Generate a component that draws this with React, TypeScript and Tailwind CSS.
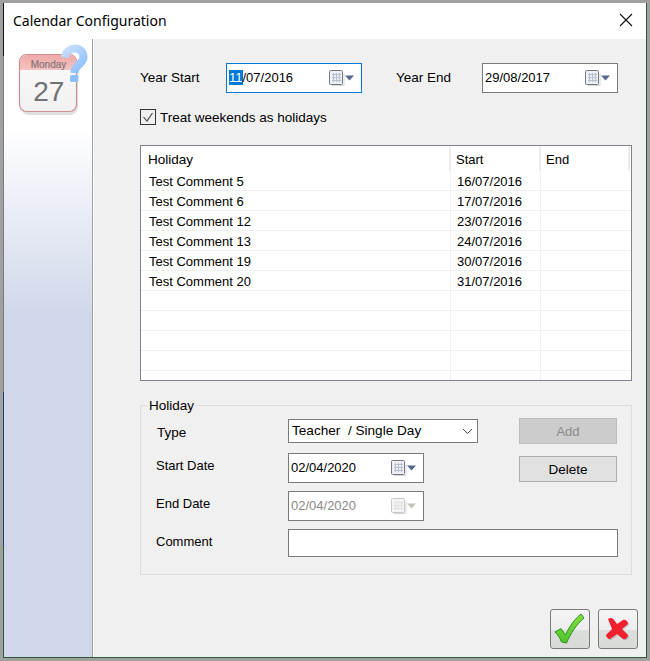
const holidays = [
  { name: "Test Comment 5", start: "16/07/2016" },
  { name: "Test Comment 6", start: "17/07/2016" },
  { name: "Test Comment 12", start: "23/07/2016" },
  { name: "Test Comment 13", start: "24/07/2016" },
  { name: "Test Comment 19", start: "30/07/2016" },
  { name: "Test Comment 20", start: "31/07/2016" },
  { name: "", start: "" },
  { name: "", start: "" },
  { name: "", start: "" },
  { name: "", start: "" },
  { name: "", start: "" },
];

function CalendarGlyph({ disabled }: { disabled?: boolean }) {
  const edge = disabled ? "#c8c8c8" : "#77777f";
  const grid = disabled ? "#e2e2e2" : "#b9bfd0";
  const arrow = disabled ? "#c4c4bc" : "#56688c";
  return (
    <svg width="26" height="16" viewBox="0 0 26 16" className="shrink-0">
      <path d="M3 15.5h12V4" fill="none" stroke="#d4d4d4" strokeWidth="1" />
      <rect x="0.5" y="0.5" width="13" height="14" rx="1" fill={disabled ? "#f4f4f4" : "#eeeff4"} stroke={edge} />
      <path d="M3 4.5h9M3 7.5h9M3 10.5h9M4.5 3v9M7.5 3v9M10.5 3v9" stroke={grid} strokeWidth="1" />
      <path d="M16 5.5h9l-4.5 5z" fill={arrow} />
    </svg>
  );
}

function DateField({ value, focused, disabled }: { value: string; focused?: boolean; disabled?: boolean }) {
  return (
    <div
      className={`flex h-[30px] w-[136px] shrink-0 items-center justify-between border bg-white pl-[2px] pr-[6px] ${
        focused ? "border-[#0078d7]" : "border-[#7a7a7a]"
      } ${disabled ? "text-[#8a8a8a]" : "text-black"}`}
    >
      <span>
        {focused ? (
          <>
            <span className="bg-[#0078d7] text-white">{value.slice(0, 2)}</span>
            {value.slice(2)}
          </>
        ) : (
          value
        )}
      </span>
      <CalendarGlyph disabled={disabled} />
    </div>
  );
}

function CalendarLogo() {
  return (
    <svg width="72" height="72" viewBox="0 0 72 72">
      <defs>
        <linearGradient id="calHead" x1="0" y1="0" x2="0" y2="1">
          <stop offset="0" stopColor="#f0a9a8" />
          <stop offset="1" stopColor="#f3c4c2" />
        </linearGradient>
        <linearGradient id="calBody" x1="0" y1="0" x2="0" y2="1">
          <stop offset="0" stopColor="#fbfbfb" />
          <stop offset="1" stopColor="#f1f1f1" />
        </linearGradient>
        <linearGradient id="quest" gradientUnits="userSpaceOnUse" x1="44" y1="2" x2="68" y2="30">
          <stop offset="0" stopColor="#cfe2f8" />
          <stop offset="1" stopColor="#82baff" />
        </linearGradient>
      </defs>
      <rect x="3" y="13" width="57" height="58" rx="8" fill="#c9c9cf" opacity="0.6" />
      <rect x="1.5" y="10.5" width="57" height="57" rx="7" fill="url(#calBody)" stroke="#cf8f8f" strokeWidth="1.2" />
      <path d="M2 26V18a7 7 0 0 1 7-7h42a7 7 0 0 1 7 7v8z" fill="url(#calHead)" />
      <text
        x="30.5"
        y="24"
        textAnchor="middle"
        fontFamily="'Liberation Sans', sans-serif"
        fontSize="10"
        fill="#877474"
        stroke="#877474"
        strokeWidth="0.2"
      >
        Monday
      </text>
      <text x="30.8" y="57" textAnchor="middle" fontFamily="'Liberation Sans', sans-serif" fontSize="28" fill="#717171">
        27
      </text>
      <path
        d="M46.5 13.5 C48 7.5 52.5 4.5 57 4.5 C62.5 4.5 65.5 8.5 65.5 13 C65.5 20 56.8 20 56.3 29"
        fill="none"
        stroke="url(#quest)"
        strokeWidth="8"
      />
      <rect x="52" y="31" width="8.4" height="7" rx="1.5" fill="#8dbffb" />
    </svg>
  );
}

export default function App() {
  return (
    <div className="flex h-[661px] w-[650px] overflow-hidden bg-[#a0a0a0] p-[3px] font-['Liberation_Sans',Arial,sans-serif] text-[13px] text-black">
      <div className="w-px shrink-0 bg-[linear-gradient(#111_0px,#111_53px,#7c7c7c_53px,#7c7c7c_389px,#1f3f70_389px,#1f3f70_543px,#2b5a32_543px)]" />
      <div className="flex h-full min-w-0 flex-1 flex-col border-b border-r border-b-[#2b5a32] border-r-[#2b5a32] bg-white">
        <div className="flex h-[36px] shrink-0 items-center justify-between pb-[2px] pl-[9px] pr-[13px]">
          <span className="font-['Noto_Sans',sans-serif] text-[14px]">Calendar Configuration</span>
          <svg width="14" height="14" viewBox="0 0 14 14">
            <path d="M1 1l12 12M13 1L1 13" stroke="#111" strokeWidth="1.1" fill="none" />
          </svg>
        </div>
        <div className="flex min-h-0 flex-1">
          <div className="w-[88px] shrink-0 bg-[linear-gradient(#ffffff_14%,#d0d7ea_45%)] pl-[14px] pt-[5px]">
            <CalendarLogo />
          </div>
          <div className="w-px shrink-0 bg-[#a0a0a0]" />
          <div className="w-px shrink-0 bg-white" />
          <div className="min-w-0 flex-1 bg-[#f0f0f0] pl-[46px] pr-[8px] pt-[24px]">
            <div className="flex items-center">
              <span className="w-[86px] shrink-0 text-[13.5px]">Year Start</span>
              <DateField value="11/07/2016" focused />
              <span className="ml-[34px] w-[86px] shrink-0 text-[13.5px]">Year End</span>
              <DateField value="29/08/2017" />
            </div>

            <div className="mt-[16px] flex h-[16px] items-center gap-[4px]">
              <span className="flex h-[16px] w-[16px] items-center justify-center border border-[#333]">
                <svg width="14" height="14" viewBox="0 0 14 14">
                  <path d="M2.5 7l3.5 4 5.5-8" fill="none" stroke="#444" strokeWidth="1.1" />
                </svg>
              </span>
              <span className="pt-[2px] text-[13.5px]">Treat weekends as holidays</span>
            </div>

            <div className="mt-[20px] h-[236px] w-[492px] overflow-hidden border border-[#82828f] bg-white">
              <div className="grid h-[25px] grid-cols-[310px_90px_90px] items-center">
                <span className="h-full border-r-2 border-[#ececec] pl-[7px] pt-[4px] text-[13.5px]">Holiday</span>
                <span className="h-full border-r-2 border-[#ececec] pl-[5px] pt-[4px]">Start</span>
                <span className="mr-[1px] h-full border-r-2 border-[#ececec] pl-[5px] pt-[4px]">End</span>
              </div>
              {holidays.map((row, i) => (
                <div key={i} className="grid h-[20px] grid-cols-[310px_90px_90px] items-center border-b border-[#f0f0f0]">
                  <span className="h-full border-r border-[#f0f0f0] pl-[8px] pt-[1px]">{row.name}</span>
                  <span className="h-full border-r border-[#f0f0f0] pl-[6px] pt-[1px]">{row.start}</span>
                  <span className="h-full" />
                </div>
              ))}
            </div>

            <div className="relative mt-[24px] h-[170px] w-[492px] border border-[#dcdcdc] pl-[16px] pt-[12px]">
              <span className="absolute -top-[10px] left-[6px] bg-[#f0f0f0] px-[2px] text-[13.5px]">Holiday</span>
              <div className="flex">
                <div className="mt-[1px] flex w-[321px] flex-col">
                  <div className="flex h-[24px] items-center">
                    <span className="w-[131px] shrink-0 pt-[5px] text-[13.5px]">Type</span>
                    <div className="flex h-[24px] w-[190px] items-center justify-between border border-[#7a7a7a] bg-white pl-[3px] pr-[4px]">
                      <span className="whitespace-pre text-[13.6px]">Teacher  / Single Day</span>
                      <svg width="11" height="7" viewBox="0 0 11 7">
                        <path d="M1 1l4.5 4.5L10 1" fill="none" stroke="#444" strokeWidth="1" />
                      </svg>
                    </div>
                  </div>
                  <div className="mt-[10px] flex h-[30px] items-center">
                    <span className="-ml-[1px] w-[132px] shrink-0 pb-[4px]">Start Date</span>
                    <DateField value="02/04/2020" />
                  </div>
                  <div className="mt-[8px] flex h-[30px] items-center">
                    <span className="-ml-[1px] w-[132px] shrink-0 pb-[4px]">End Date</span>
                    <DateField value="02/04/2020" disabled />
                  </div>
                </div>
                <div className="ml-[41px] flex w-[98px] flex-col gap-[12px]">
                  <button className="h-[26px] border border-[#bcbcbc] bg-[#cccccc] pt-[2px] text-[#8a8a8a]">Add</button>
                  <button className="h-[26px] border border-[#adadad] bg-[#e1e1e1] pt-[2px] text-[13.5px]">Delete</button>
                </div>
              </div>
              <div className="mt-[8px] flex h-[28px] items-center">
                <span className="-ml-[1px] w-[132px] shrink-0 pb-[2px]">Comment</span>
                <div className="h-[28px] w-[330px] border border-[#7a7a7a] bg-white" />
              </div>
            </div>

            <div className="mt-[34px] flex justify-end gap-[8px]">
              <button className="h-[40px] w-[40px] rounded-[3px] border border-[#7a7a7a] bg-[linear-gradient(#f6f4f6_0%,#ededed_52%,#dcdedc_54%,#d8dad8_100%)]">
                <svg width="38" height="38" viewBox="0 0 38 38">
                  <defs>
                    <linearGradient id="okFill" x1="0" y1="0" x2="0" y2="1">
                      <stop offset="0" stopColor="#7fe040" />
                      <stop offset="1" stopColor="#4fc42a" />
                    </linearGradient>
                  </defs>
                  <path
                    d="M4 22 L10 18.5 L14.5 25 C19 15 24 9 30 4 L33 8 C25 15 20 23 15.5 33 L10.5 32 C9 28 7 25 4 22 Z"
                    fill="url(#okFill)"
                    stroke="#2f8f22"
                    strokeWidth="1"
                    strokeLinejoin="round"
                  />
                </svg>
              </button>
              <button className="h-[40px] w-[40px] rounded-[3px] border border-[#7a7a7a] bg-[linear-gradient(#f6f4f6_0%,#ededed_52%,#dcdedc_54%,#d8dad8_100%)]">
                <svg width="38" height="38" viewBox="0 0 38 38">
                  <path
                    d="M10 10 C12 8 15 9 16 11 L19 15 L25 11 C27 10 30 12 30 15 L24 20 L30 26 C30 29 27 31 25 30 L19 25 L12 30 C10 30 8 28 8 26 L14 20 Z"
                    fill="#9a9a9a"
                    opacity="0.5"
                  />
                  <path
                    d="M9 9 C11 7 14 8 15 10 L18 14 L24 10 C26 9 29 11 29 14 L23 19 L29 25 C29 28 26 30 24 29 L18 24 L11 29 C9 29 7 27 7 25 L13 19 Z"
                    fill="#f2202f"
                    strokeLinejoin="round"
                  />
                </svg>
              </button>
            </div>
          </div>
        </div>
      </div>
    </div>
  );
}
